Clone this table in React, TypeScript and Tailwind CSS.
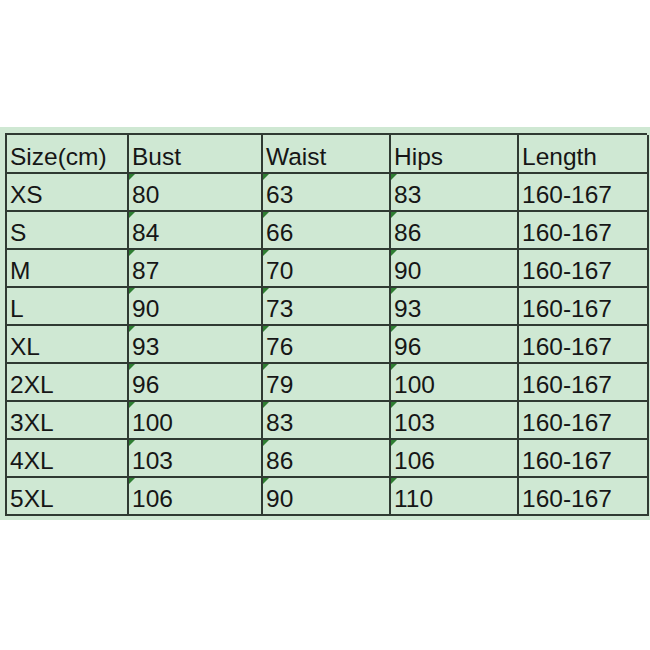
const header = ["Size(cm)", "Bust", "Waist", "Hips", "Length"];

const rows = [
  ["XS", "80", "63", "83", "160-167"],
  ["S", "84", "66", "86", "160-167"],
  ["M", "87", "70", "90", "160-167"],
  ["L", "90", "73", "93", "160-167"],
  ["XL", "93", "76", "96", "160-167"],
  ["2XL", "96", "79", "100", "160-167"],
  ["3XL", "100", "83", "103", "160-167"],
  ["4XL", "103", "86", "106", "160-167"],
  ["5XL", "106", "90", "110", "160-167"],
];

const Cell = ({ text, marker, tall }: { text: string; marker?: boolean; tall?: boolean }) => (
  <div
    className={`relative flex items-end border-r-2 border-b-2 border-[#2f3a32] pl-[3px] pb-[3px] ${
      tall ? "h-[39px]" : "h-[38px]"
    }`}
  >
    {marker && (
      <span className="absolute left-0 top-0 w-0 h-0 border-t-[6px] border-r-[6px] border-t-[#2e7d32] border-r-transparent" />
    )}
    <span className="leading-none">{text}</span>
  </div>
);

export default function App() {
  return (
    <div className="w-[650px] h-[650px] bg-white pt-[127px]">
      <div className="h-[393px] bg-[#cfe8d3] pl-[5px] pt-[6px]">
        <div
          className="grid grid-cols-[122px_134px_128px_128px_130px] w-[642px] border-l-2 border-t-2 border-[#2f3a32] text-[24.5px] text-[#161616]"
          style={{ fontFamily: '"Liberation Sans", Arial, sans-serif' }}
        >
          {header.map((h) => (
            <Cell key={h} text={h} tall />
          ))}
          {rows.map((r) =>
            r.map((v, i) => <Cell key={r[0] + i} text={v} marker={i >= 1 && i <= 3} />)
          )}
        </div>
      </div>
    </div>
  );
}
